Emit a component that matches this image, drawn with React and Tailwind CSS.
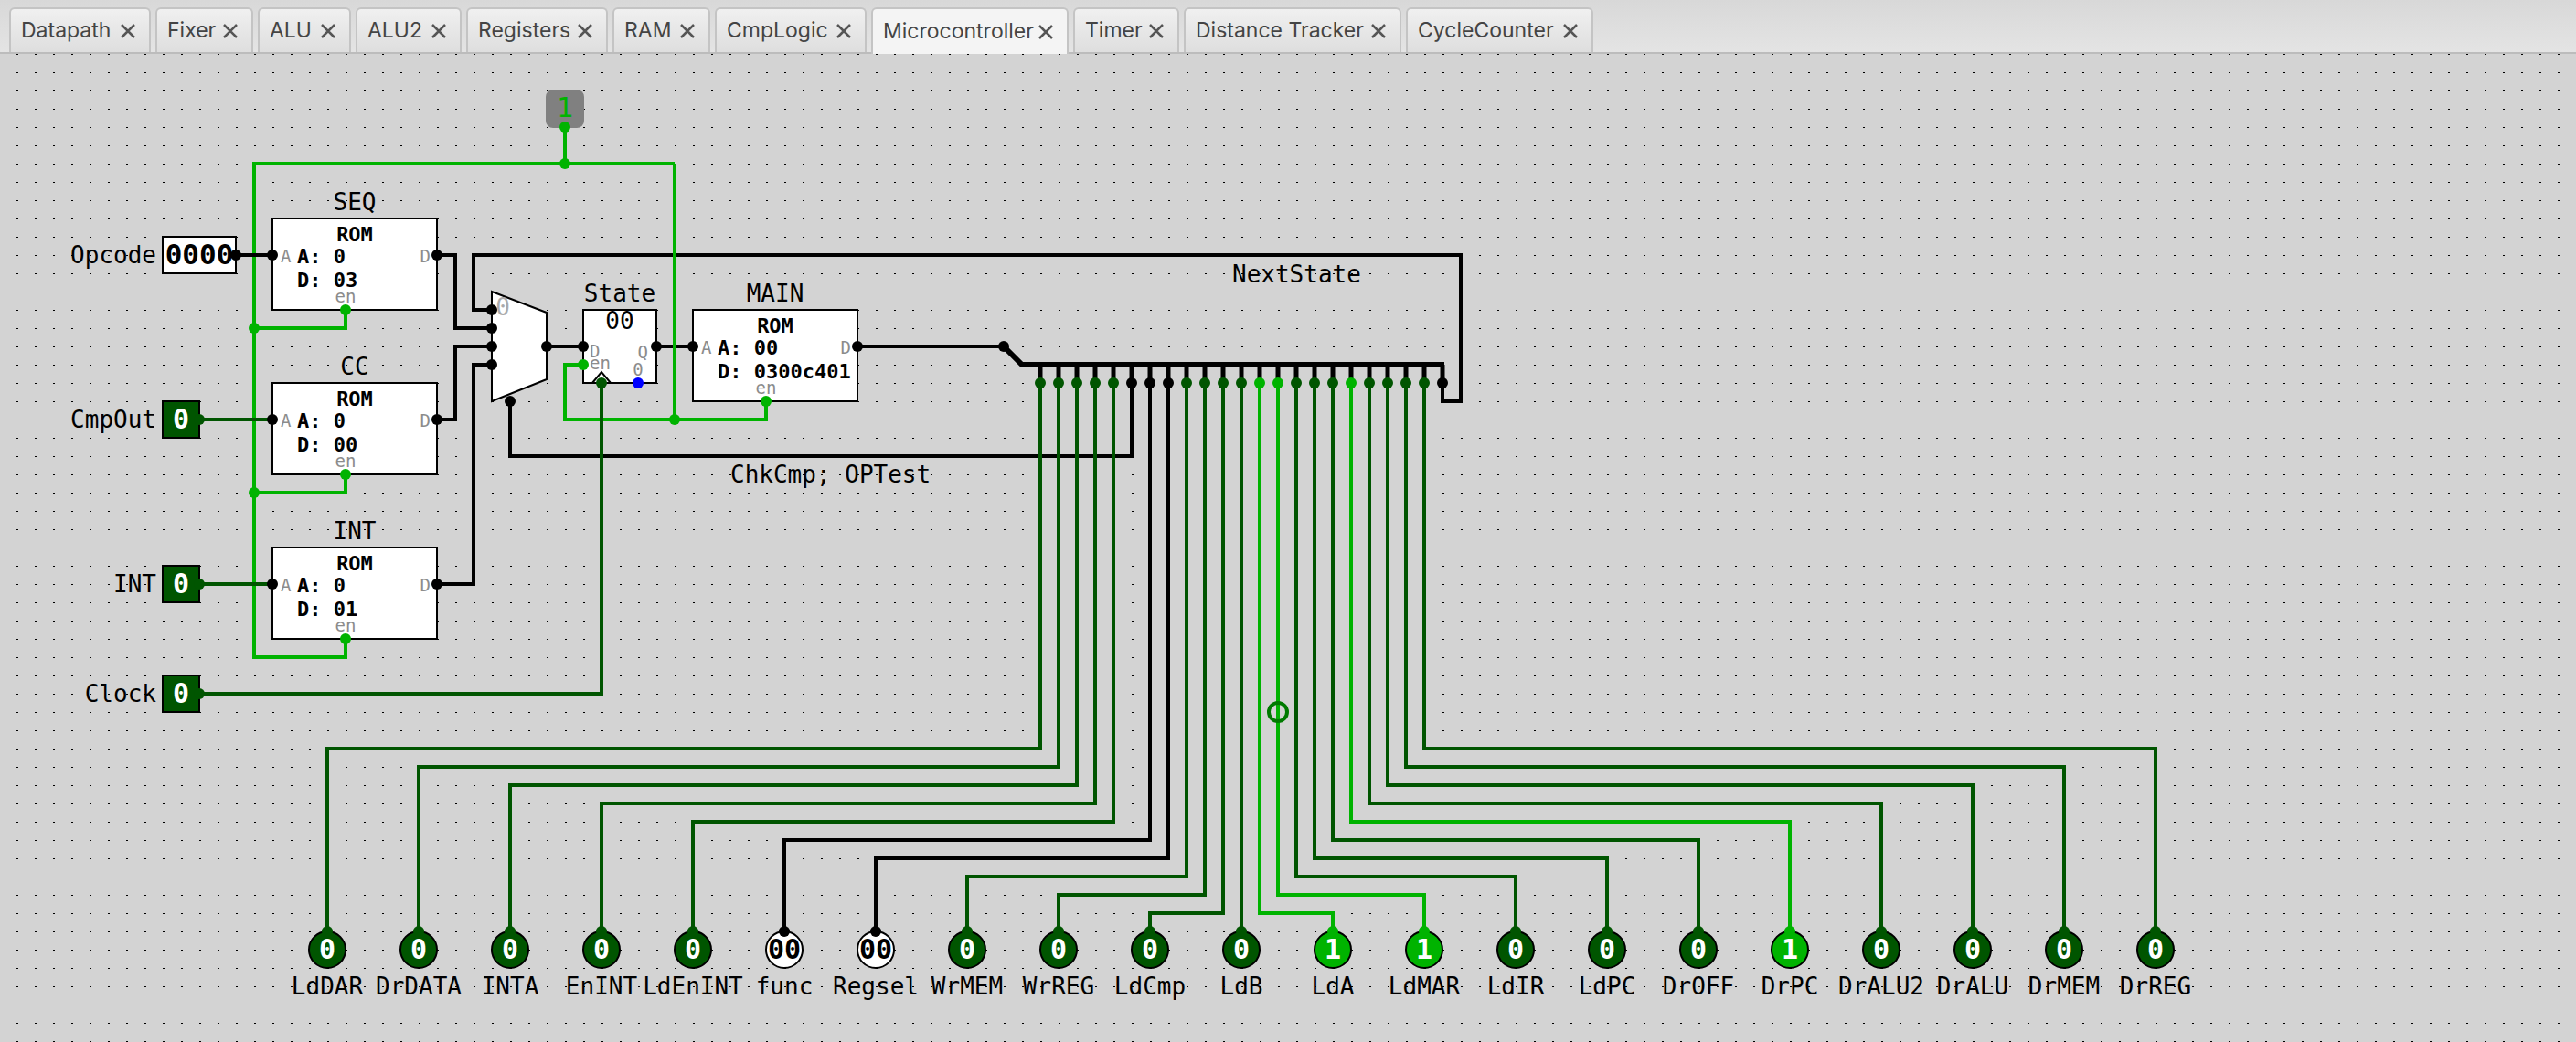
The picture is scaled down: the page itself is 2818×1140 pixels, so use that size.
const tabs = [
  ['Datapath', 'w-[155px]'],
  ['Fixer', 'w-[107px]'],
  ['ALU', 'w-[102px]'],
  ['ALU2', 'w-[116px]'],
  ['Registers', 'w-[155px]'],
  ['RAM', 'w-[107px]'],
  ['CmpLogic', 'w-[166px]'],
  ['Microcontroller', 'w-[216px]'],
  ['Timer', 'w-[116px]'],
  ['Distance Tracker', 'w-[238px]'],
  ['CycleCounter', 'w-[205px]'],
];

const BLACK = 'stroke-black';
const DARK = 'stroke-[#005500]';
const BRIGHT = 'stroke-[#00b300]';

const pinFill = {
  black: 'fill-black',
  dark: 'fill-[#005500]',
  bright: 'fill-[#00b300]',
  blue: 'fill-[#0000ff]',
};

// splitter outputs, in order: x of the pin, state, y of the bend, x of the output
const splitOuts = [
  [1138, 'dark', 819, 358],
  [1158, 'dark', 839, 458],
  [1178, 'dark', 859, 558],
  [1198, 'dark', 879, 658],
  [1218, 'dark', 899, 758],
  [1238, 'black'],
  [1258, 'black', 919, 858],
  [1278, 'black', 939, 958],
  [1298, 'dark', 959, 1058],
  [1318, 'dark', 979, 1158],
  [1338, 'dark', 999, 1258],
  [1358, 'dark', 1000, 1358],
  [1378, 'bright', 999, 1458],
  [1398, 'bright', 979, 1558],
  [1418, 'dark', 959, 1658],
  [1438, 'dark', 939, 1758],
  [1458, 'dark', 919, 1858],
  [1478, 'bright', 899, 1958],
  [1498, 'dark', 879, 2058],
  [1518, 'dark', 859, 2158],
  [1538, 'dark', 839, 2258],
  [1558, 'dark', 819, 2358],
  [1578, 'black'],
];

const outputs = [
  ['LdDAR', 358, '0', 'dark'],
  ['DrDATA', 458, '0', 'dark'],
  ['INTA', 558, '0', 'dark'],
  ['EnINT', 658, '0', 'dark'],
  ['LdEnINT', 758, '0', 'dark'],
  ['func', 858, '00', 'black'],
  ['Regsel', 958, '00', 'black'],
  ['WrMEM', 1058, '0', 'dark'],
  ['WrREG', 1158, '0', 'dark'],
  ['LdCmp', 1258, '0', 'dark'],
  ['LdB', 1358, '0', 'dark'],
  ['LdA', 1458, '1', 'bright'],
  ['LdMAR', 1558, '1', 'bright'],
  ['LdIR', 1658, '0', 'dark'],
  ['LdPC', 1758, '0', 'dark'],
  ['DrOFF', 1858, '0', 'dark'],
  ['DrPC', 1958, '1', 'bright'],
  ['DrALU2', 2058, '0', 'dark'],
  ['DrALU', 2158, '0', 'dark'],
  ['DrMEM', 2258, '0', 'dark'],
  ['DrREG', 2358, '0', 'dark'],
];

const wireColor = { black: BLACK, dark: DARK, bright: BRIGHT };

function Wire({ d, color = BLACK }) {
  return <polyline points={d} className={`fill-none stroke-[4px] ${color}`} />;
}

function Pin({ x, y, state = 'black' }) {
  return <circle cx={x} cy={y} r="6" className={pinFill[state]} />;
}

function Label({ x, y, anchor = 'middle', children }) {
  return (
    <text x={x} y={y} textAnchor={anchor} className="fill-black text-[26px]">
      {children}
    </text>
  );
}

function PinLabel({ x, y, anchor = 'start', children }) {
  return (
    <text x={x} y={y} textAnchor={anchor} className="fill-[#8c8c8c] text-[19px]">
      {children}
    </text>
  );
}

function Rom({ x, y, name, addr, data, width = 180 }) {
  return (
    <g>
      <rect x={x} y={y} width={width} height="100" className="fill-white stroke-black stroke-2" />
      <Label x={x + width / 2} y={y - 9}>{name}</Label>
      <text x={x + width / 2} y={y + 25} textAnchor="middle" className="fill-black text-[22px] font-bold">ROM</text>
      <text x={x + 27} y={y + 49} className="fill-black text-[22px] font-bold">A: {addr}</text>
      <text x={x + 27} y={y + 75} className="fill-black text-[22px] font-bold">D: {data}</text>
      <PinLabel x={x + 9} y={y + 48}>A</PinLabel>
      <PinLabel x={x + width - 7} y={y + 48} anchor="end">D</PinLabel>
      <PinLabel x={x + 80} y={y + 92} anchor="middle">en</PinLabel>
      <Pin x={x} y={y + 40} />
      <Pin x={x + width} y={y + 40} />
      <Pin x={x + 80} y={y + 100} state="bright" />
    </g>
  );
}

function Input({ y, name, value = '0' }) {
  return (
    <g>
      <Label x={171} y={y + 9} anchor="end">{name}</Label>
      <rect x="178" y={y - 20} width="40" height="40" className="fill-[#005500] stroke-black stroke-2" />
      <text x="198" y={y + 10} textAnchor="middle" className="fill-white text-[30px] font-bold">{value}</text>
      <Pin x={218} y={y} state="dark" />
    </g>
  );
}

function Output({ name, x, value, state }) {
  const light = state === 'black';
  return (
    <g>
      <circle
        cx={x}
        cy="1039"
        r="20"
        className={`stroke-black stroke-2 ${light ? 'fill-white' : pinFill[state]}`}
      />
      <text x={x} y="1049" textAnchor="middle" className={`text-[30px] font-bold ${light ? 'fill-black' : 'fill-white'}`}>
        {value}
      </text>
      <Pin x={x} y={1019} state={state} />
      <Label x={x} y={1088}>{name}</Label>
    </g>
  );
}

function Tab({ title, width, active }) {
  return (
    <div
      className={`flex items-center justify-between rounded-t-[6px] border-2 border-b-0 border-[#c4c4c4] pl-[11px] pr-[15px] text-[23px] text-[#444444] font-['Inter',sans-serif] ${width} ${
        active ? 'z-10 -mb-[2px] h-[51px] bg-[#f4f4f4]' : 'h-[49px] bg-gradient-to-b from-[#f0f0f0] to-[#dedede]'
      }`}
    >
      <span>{title}</span>
      <svg width="16" height="16" viewBox="0 0 16 16" className="stroke-[#555555] stroke-[2.5px]">
        <path d="M1 1 L15 15 M15 1 L1 15" fill="none" />
      </svg>
    </div>
  );
}

function Circuit() {
  return (
    <svg viewBox="0 59 2818 1081" className="block h-full w-full font-['DejaVu_Sans_Mono',monospace]">
      <defs>
        <pattern id="grid" x="0" y="0" width="20" height="20" patternUnits="userSpaceOnUse">
          <rect x="18" y="19" width="2" height="2" fill="#000000" />
        </pattern>
      </defs>
      <rect x="0" y="59" width="2818" height="1081" className="fill-[#d3d3d3]" />
      <rect x="0" y="59" width="2818" height="1081" fill="url(#grid)" />

      {/* enable net, left side */}
      <Wire color={BRIGHT} d="378,699 378,719 278,719 278,179 738,179" />
      <Wire color={BRIGHT} d="378,339 378,359 278,359" />
      <Wire color={BRIGHT} d="378,519 378,539 278,539" />
      <Wire color={BRIGHT} d="618,139 618,179" />

      {/* buses */}
      <Wire d="258,279 298,279" />
      <Wire d="478,279 498,279 498,359 538,359" />
      <Wire d="478,459 498,459 498,379 538,379" />
      <Wire d="478,639 518,639 518,399 538,399" />
      <Wire d="598,379 638,379" />
      <Wire d="718,379 758,379" />
      <Wire d="938,379 1098,379" />
      <Wire d="538,339 518,339 518,279 1598,279 1598,439 1578,439 1578,419" />
      <Wire d="558,439 558,499 1238,499 1238,419" />

      {/* enable net, right side */}
      <Wire color={BRIGHT} d="738,179 738,459" />
      <Wire color={BRIGHT} d="838,439 838,459 618,459 618,399 638,399" />

      {/* inputs */}
      <Wire color={DARK} d="218,459 298,459" />
      <Wire color={DARK} d="218,639 298,639" />
      <Wire color={DARK} d="218,759 658,759 658,419" />

      {/* const 1 */}
      <rect x="597" y="98" width="42" height="42" rx="8" className="fill-[#808080]" />
      <text x="618" y="128" textAnchor="middle" className="fill-[#00b300] text-[30px]">1</text>
      <Pin x={618} y={139} state="bright" />
      <Pin x={618} y={179} state="bright" />
      <Pin x={278} y={359} state="bright" />
      <Pin x={278} y={539} state="bright" />
      <Pin x={738} y={459} state="bright" />

      {/* opcode */}
      <Label x={171} y={288} anchor="end">Opcode</Label>
      <rect x="178" y="259" width="80" height="40" className="fill-white stroke-black stroke-2" />
      <text x="218" y="289" textAnchor="middle" className="fill-black text-[31px] font-bold">0000</text>
      <Pin x={258} y={279} />

      <Input y={459} name="CmpOut" />
      <Input y={639} name="INT" />
      <Input y={759} name="Clock" />

      <Rom x={298} y={239} name="SEQ" addr="0" data="03" />
      <Rom x={298} y={419} name="CC" addr="0" data="00" />
      <Rom x={298} y={599} name="INT" addr="0" data="01" />

      {/* multiplexer */}
      <polygon points="538,319 598,342 598,415 538,439" className="fill-white stroke-black stroke-2" />
      <text x="550" y="345" textAnchor="middle" className="fill-[#aaaaaa] text-[26px]">0</text>
      <Pin x={538} y={339} />
      <Pin x={538} y={359} />
      <Pin x={538} y={379} />
      <Pin x={538} y={399} />
      <Pin x={598} y={379} />
      <Pin x={558} y={439} />

      {/* state register */}
      <Label x={678} y={330}>State</Label>
      <rect x="638" y="339" width="80" height="80" className="fill-white stroke-black stroke-2" />
      <text x="678" y="360" textAnchor="middle" className="fill-black text-[26px]">00</text>
      <PinLabel x={645} y={391}>D</PinLabel>
      <PinLabel x={709} y={392} anchor="end">Q</PinLabel>
      <PinLabel x={645} y={404}>en</PinLabel>
      <PinLabel x={698} y={411} anchor="middle">0</PinLabel>
      <polyline points="648,419 658,407 668,419" className="fill-none stroke-black stroke-2" />
      <Pin x={638} y={379} />
      <Pin x={718} y={379} />
      <Pin x={638} y={399} state="bright" />
      <Pin x={658} y={419} state="dark" />
      <Pin x={698} y={419} state="blue" />

      <Rom x={758} y={339} name="MAIN" addr="00" data="0300c401" />

      {/* splitter */}
      <polyline points="1098,379 1118,399 1580,399" className="fill-none stroke-black stroke-[6px]" />
      {splitOuts.map(([x, state, bend, to]) => (
        <g key={x}>
          <line x1={x} y1="399" x2={x} y2="419" className="stroke-black stroke-[5px]" />
          {to && <Wire color={wireColor[state]} d={`${x},419 ${x},${bend} ${to},${bend} ${to},1019`} />}
          <Pin x={x} y={419} state={state} />
        </g>
      ))}
      <Pin x={1098} y={379} />

      {/* probe */}
      <circle cx="1398" cy="779" r="10" className="fill-none stroke-[#007a00] stroke-[4px]" />

      {outputs.map((o) => (
        <Output key={o[0]} name={o[0]} x={o[1]} value={o[2]} state={o[3]} />
      ))}

      <Label x={1348} y={309} anchor="start">NextState</Label>
      <Label x={799} y={528} anchor="start">ChkCmp; OPTest</Label>
    </svg>
  );
}

export default function App() {
  return (
    <div className="flex h-[1140px] w-[2818px] flex-col overflow-hidden">
      <div className="flex h-[59px] shrink-0 items-end gap-[5px] border-b-2 border-[#bcbcbc] bg-gradient-to-b from-[#d8d8d8] to-[#e4e4e4] pl-[10px]">
        {tabs.map(([title, width]) => (
          <Tab key={title} title={title} width={width} active={title === 'Microcontroller'} />
        ))}
      </div>
      <div className="min-h-0 flex-1">
        <Circuit />
      </div>
    </div>
  );
}
